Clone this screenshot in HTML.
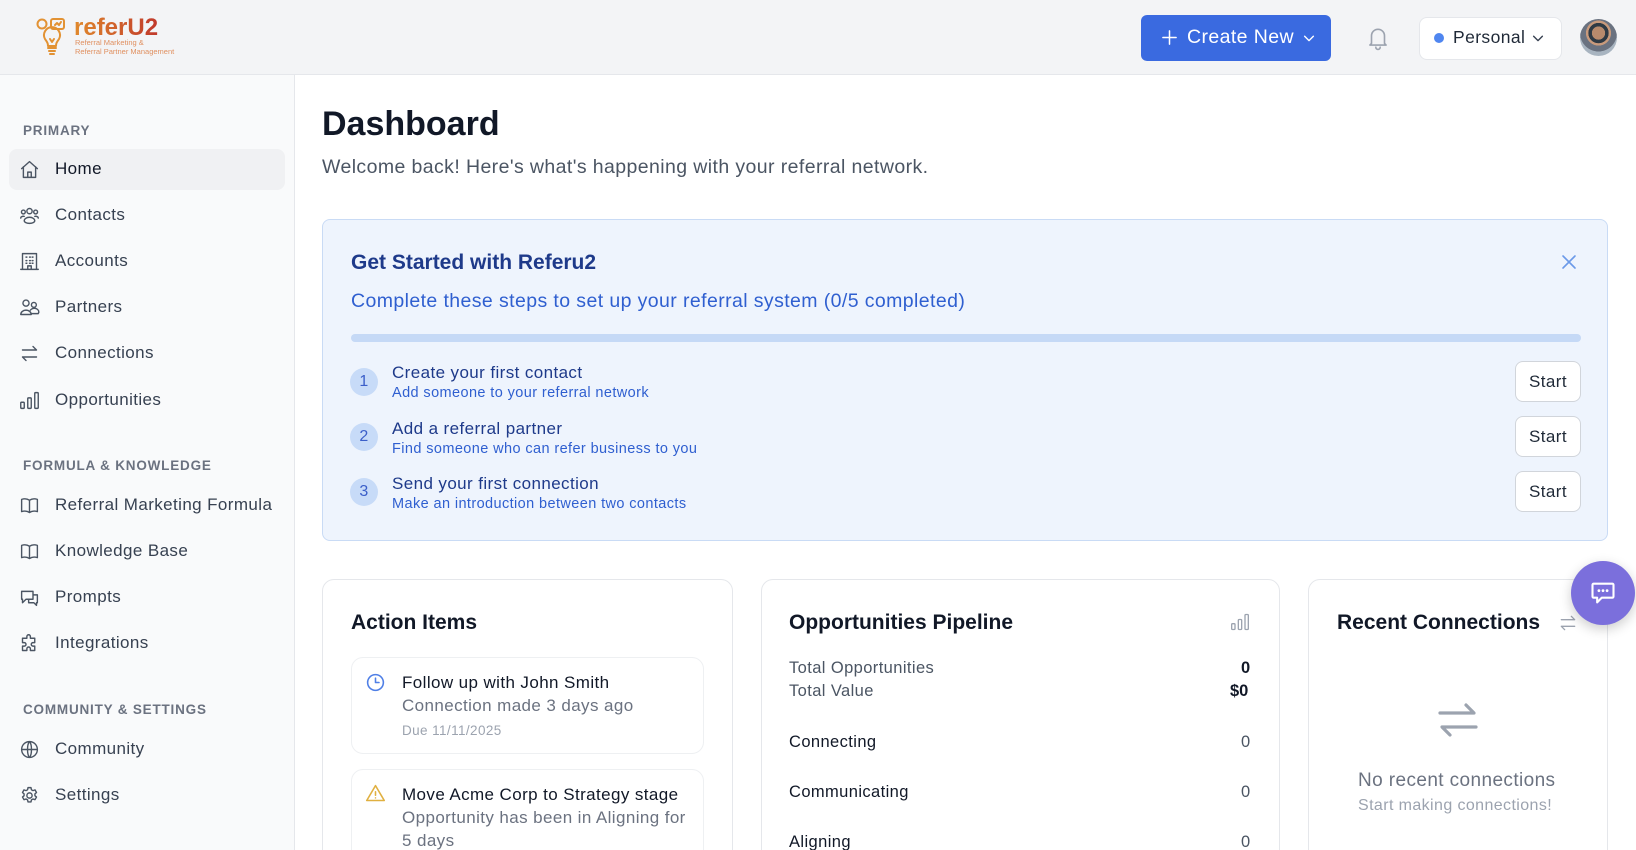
<!DOCTYPE html>
<html><head><meta charset="utf-8"><style>
*{margin:0;padding:0;box-sizing:border-box}
html{width:1636px;height:850px;overflow:hidden}
body{width:1636px;height:850px;overflow:hidden;background:#fff;font-family:"Liberation Sans",Arial,sans-serif;position:relative;color:#111827;letter-spacing:.025em}
.a{position:absolute}
.t{position:absolute;white-space:nowrap;line-height:1}
.b{letter-spacing:0}
svg{position:absolute;fill:none;stroke-linecap:round;stroke-linejoin:round}
.nav{font-size:17px;color:#374151}
.sec{font-size:13.5px;font-weight:bold;color:#6b7280;letter-spacing:.8px}
.ni{stroke:#4b5563;stroke-width:1.6}
.card{position:absolute;background:#fff;border:1px solid #e5e7eb;border-radius:12px}
.start{position:absolute;left:1515px;width:66px;height:41px;background:#fff;border:1px solid #d1d5db;border-radius:8px;font-size:17px;color:#1f2937;text-align:center;line-height:39px}
.num{position:absolute;left:350px;width:28px;height:28px;border-radius:50%;background:#c7dbf8;color:#3b5fc9;font-size:16px;text-align:center;line-height:28px}
</style></head><body>
<!-- header -->
<div class="a" style="left:0;top:0;width:1636px;height:75px;background:#f3f4f6;border-bottom:1px solid #e5e7eb"></div>
<svg style="left:36px;top:17px" width="34" height="40" viewBox="0 0 34 40" stroke="#e29234" stroke-width="2">
<circle cx="6" cy="7" r="4.5"/><rect x="15" y="2" width="13" height="10" rx="2"/><path d="M19 8l2-2 2 2 2-3"/>
<path d="M9 22a8 8 0 1 1 14 0c-2 3-3 4-3 7h-8c0-3-1-4-3-7z"/><path d="M12 31h8M13 34h6M14 37h4M14 22l2 3 2-3"/></svg>
<div class="t b" style="left:74px;top:16px;font-size:24px;font-weight:bold;background:linear-gradient(90deg,#e0892c,#c0392b);-webkit-background-clip:text;color:transparent">referU2</div>
<div class="t b" style="left:75px;top:39px;font-size:7.5px;color:#e09060">Referral Marketing &amp;</div>
<div class="t b" style="left:75px;top:48px;font-size:7.5px;color:#e09060">Referral Partner Management</div>

<div class="a" style="left:1141px;top:15px;width:190px;height:46px;background:#3a6ae0;border-radius:6px"></div>
<svg style="left:1161px;top:29px" width="17" height="17" viewBox="0 0 18 18" stroke="#fff" stroke-width="1.6"><path d="M9 2v14M2 9h14"/></svg>
<div class="t" style="left:1187px;top:28px;font-size:19.5px;color:#fff">Create New</div>
<svg style="left:1302px;top:31px" width="14" height="14" viewBox="0 0 16 16" stroke="#fff" stroke-width="1.6"><path d="M3 6l5 5 5-5"/></svg>
<svg style="left:1365px;top:25px" width="26" height="26" viewBox="0 0 24 24" stroke="#9ca3af" stroke-width="1.5"><path d="M6 17V10a6 6 0 0 1 12 0v7l1.5 1.5h-15zM10 20.5a2 2 0 0 0 4 0"/></svg>
<div class="a" style="left:1419px;top:17px;width:143px;height:43px;background:#fff;border:1px solid #e5e7eb;border-radius:8px"></div>
<div class="a" style="left:1434px;top:33px;width:10px;height:10px;border-radius:50%;background:#4f86f0"></div>
<div class="t" style="left:1453px;top:29px;font-size:17.5px;color:#1f2937">Personal</div>
<svg style="left:1531px;top:31px" width="14" height="14" viewBox="0 0 16 16" stroke="#374151" stroke-width="1.6"><path d="M3 6l5 5 5-5"/></svg>
<div class="a" style="left:1580px;top:19px;width:37px;height:37px;border-radius:50%;background:radial-gradient(circle at 50% 38%,#b88a6c 0 22%,#2f3a44 23% 34%,#c89a7c 35% 42%,#6a7280 43% 62%,#a8b4c0 63%)"></div>

<!-- sidebar -->
<div class="a" style="left:0;top:75px;width:295px;height:775px;background:#f9fafb;border-right:1px solid #e5e7eb"></div>
<div class="t sec" style="left:23px;top:124px">PRIMARY</div>
<div class="a" style="left:9px;top:149px;width:276px;height:41px;background:#f0f1f3;border-radius:8px"></div>
<svg class="ni" style="left:19px;top:159px" width="21" height="21" viewBox="0 0 24 24" stroke="#111827" stroke-width="1.7"><path d="M3 11l9-8 9 8M5 9v12h14V9M10 21v-6h4v6"/></svg>
<div class="t nav" style="left:55px;top:160px;color:#111827">Home</div>
<svg class="ni" style="left:19px;top:205px" width="21" height="21" viewBox="0 0 24 24"><circle cx="12" cy="7" r="3"/><circle cx="5" cy="8" r="2.2"/><circle cx="19" cy="8" r="2.2"/><path d="M6 18a6 4 0 0 1 12 0 6 3 0 0 1-12 0zM2 15a3 2 0 0 1 4-2M22 15a3 2 0 0 0-4-2"/></svg>
<div class="t nav" style="left:55px;top:206px">Contacts</div>
<svg class="ni" style="left:19px;top:251px" width="21" height="21" viewBox="0 0 24 24"><path d="M4 21V3h16v18M2 21h20M10 21v-4h4v4M8 7h1M12 7h1M15 7h1M8 11h1M12 11h1M15 11h1M8 14h1M12 14h1M15 14h1"/></svg>
<div class="t nav" style="left:55px;top:252px">Accounts</div>
<svg class="ni" style="left:19px;top:297px" width="21" height="21" viewBox="0 0 24 24"><circle cx="8" cy="7" r="3.5"/><circle cx="17" cy="9" r="2.8"/><path d="M2 20a6 5 0 0 1 12 0zM13 15a5 4 0 0 1 9 4h-7"/></svg>
<div class="t nav" style="left:55px;top:298px">Partners</div>
<svg class="ni" style="left:19px;top:343px" width="21" height="21" viewBox="0 0 24 24"><path d="M4 8h16l-4-4M20 16H4l4 4"/></svg>
<div class="t nav" style="left:55px;top:344px">Connections</div>
<svg class="ni" style="left:19px;top:390px" width="21" height="21" viewBox="0 0 24 24"><rect x="2" y="14" width="4" height="7" rx="1"/><rect x="10" y="9" width="4" height="12" rx="1"/><rect x="18" y="3" width="4" height="18" rx="1"/></svg>
<div class="t nav" style="left:55px;top:391px">Opportunities</div>

<div class="t sec" style="left:23px;top:459px">FORMULA &amp; KNOWLEDGE</div>
<svg class="ni" style="left:19px;top:495px" width="21" height="21" viewBox="0 0 24 24"><path d="M12 6c-3-2-6-2-9-1v14c3-1 6-1 9 1 3-2 6-2 9-1V5c-3-1-6-1-9 1zM12 6v14"/></svg>
<div class="t nav" style="left:55px;top:496px">Referral Marketing Formula</div>
<svg class="ni" style="left:19px;top:541px" width="21" height="21" viewBox="0 0 24 24"><path d="M12 6c-3-2-6-2-9-1v14c3-1 6-1 9 1 3-2 6-2 9-1V5c-3-1-6-1-9 1zM12 6v14"/></svg>
<div class="t nav" style="left:55px;top:542px">Knowledge Base</div>
<svg class="ni" style="left:19px;top:587px" width="21" height="21" viewBox="0 0 24 24"><path d="M3 5h13v9H8l-4 4v-4H3zM16 9h5v9h-1v3l-3-3h-6v-4"/></svg>
<div class="t nav" style="left:55px;top:588px">Prompts</div>
<svg class="ni" style="left:19px;top:633px" width="21" height="21" viewBox="0 0 24 24"><path d="M9 4a2 2 0 0 1 4 0v2h5v5h-2a2 2 0 0 0 0 4h2v5h-5v-2a2 2 0 0 0-4 0v2H4v-5h2a2 2 0 0 0 0-4H4V6h5z"/></svg>
<div class="t nav" style="left:55px;top:634px">Integrations</div>

<div class="t sec" style="left:23px;top:703px">COMMUNITY &amp; SETTINGS</div>
<svg class="ni" style="left:19px;top:739px" width="21" height="21" viewBox="0 0 24 24"><circle cx="12" cy="12" r="9"/><path d="M3 12h18M12 3c3 3 3 15 0 18M12 3c-3 3-3 15 0 18"/></svg>
<div class="t nav" style="left:55px;top:740px">Community</div>
<svg class="ni" style="left:19px;top:785px" width="21" height="21" viewBox="0 0 24 24"><circle cx="12" cy="12" r="3"/><path d="M10.3 3h3.4l.5 2.4 1.8 1 2.3-.8 1.7 3-1.8 1.6v2l1.8 1.6-1.7 3-2.3-.8-1.8 1-.5 2.4h-3.4l-.5-2.4-1.8-1-2.3.8-1.7-3 1.8-1.6v-2L4 8.6l1.7-3 2.3.8 1.8-1z"/></svg>
<div class="t nav" style="left:55px;top:786px">Settings</div>

<!-- main -->
<div class="t b" style="left:322px;top:107px;font-size:34px;font-weight:bold;color:#111827">Dashboard</div>
<div class="t" style="left:322px;top:158px;font-size:19.5px;color:#4b5563">Welcome back! Here's what's happening with your referral network.</div>

<div class="a" style="left:322px;top:219px;width:1286px;height:322px;background:#eef4fd;border:1px solid #c9dbf5;border-radius:8px"></div>
<div class="t b" style="left:351px;top:252px;font-size:21px;font-weight:bold;color:#1e3a8a">Get Started with Referu2</div>
<div class="t" style="left:351px;top:292px;font-size:19.5px;color:#2f5fd0">Complete these steps to set up your referral system (0/5 completed)</div>
<svg style="left:1561px;top:254px" width="16" height="16" viewBox="0 0 16 16" stroke="#6b9ae8" stroke-width="1.6"><path d="M2 2l12 12M14 2L2 14"/></svg>
<div class="a" style="left:351px;top:334px;width:1230px;height:8px;border-radius:4px;background:#c5d9f6"></div>

<div class="num" style="top:368px">1</div>
<div class="t" style="left:392px;top:364px;font-size:17px;color:#1e3a8a">Create your first contact</div>
<div class="t" style="left:392px;top:386px;font-size:14.5px;color:#2f5fd0">Add someone to your referral network</div>
<div class="start" style="top:361px">Start</div>
<div class="num" style="top:423px">2</div>
<div class="t" style="left:392px;top:420px;font-size:17px;color:#1e3a8a">Add a referral partner</div>
<div class="t" style="left:392px;top:442px;font-size:14.5px;color:#2f5fd0">Find someone who can refer business to you</div>
<div class="start" style="top:416px">Start</div>
<div class="num" style="top:478px">3</div>
<div class="t" style="left:392px;top:475px;font-size:17px;color:#1e3a8a">Send your first connection</div>
<div class="t" style="left:392px;top:497px;font-size:14.5px;color:#2f5fd0">Make an introduction between two contacts</div>
<div class="start" style="top:471px">Start</div>

<!-- action items -->
<div class="card" style="left:322px;top:579px;width:411px;height:300px"></div>
<div class="t b" style="left:351px;top:612px;font-size:21px;font-weight:bold;color:#111827">Action Items</div>
<div class="card" style="left:351px;top:657px;width:353px;height:97px;border-color:#eef0f2"></div>
<svg style="left:365px;top:672px" width="21" height="21" viewBox="0 0 24 24" stroke="#4f7fe6" stroke-width="1.8"><circle cx="12" cy="12" r="9"/><path d="M12 7v5h4"/></svg>
<div class="t" style="left:402px;top:674px;font-size:17px;color:#111827">Follow up with John Smith</div>
<div class="t" style="left:402px;top:697px;font-size:17px;color:#6b7280">Connection made 3 days ago</div>
<div class="t" style="left:402px;top:724px;font-size:13.5px;color:#9ca3af">Due 11/11/2025</div>
<div class="card" style="left:351px;top:769px;width:353px;height:120px;border-color:#eef0f2"></div>
<svg style="left:365px;top:783px" width="21" height="21" viewBox="0 0 24 24" stroke="#e0b040" stroke-width="1.8"><path d="M12 3L2 20h20zM12 10v4M12 17h.01"/></svg>
<div class="t" style="left:402px;top:786px;font-size:17px;color:#111827">Move Acme Corp to Strategy stage</div>
<div class="t" style="left:402px;top:809px;font-size:17px;color:#6b7280">Opportunity has been in Aligning for</div>
<div class="t" style="left:402px;top:832px;font-size:17px;color:#6b7280">5 days</div>

<!-- pipeline -->
<div class="card" style="left:761px;top:579px;width:519px;height:300px"></div>
<div class="t b" style="left:789px;top:612px;font-size:21px;font-weight:bold;color:#111827">Opportunities Pipeline</div>
<svg style="left:1230px;top:612px" width="20" height="20" viewBox="0 0 24 24" stroke="#9ca3af" stroke-width="1.6"><rect x="2" y="14" width="4" height="7" rx="1"/><rect x="10" y="9" width="4" height="12" rx="1"/><rect x="18" y="3" width="4" height="18" rx="1"/></svg>
<div class="t" style="left:789px;top:660px;font-size:16.5px;color:#4b5563">Total Opportunities</div>
<div class="t" style="left:789px;top:683px;font-size:16.5px;color:#4b5563">Total Value</div>
<div class="t b" style="left:1241px;top:660px;font-size:16.5px;font-weight:bold;color:#111827">0</div>
<div class="t b" style="left:1230px;top:683px;font-size:16.5px;font-weight:bold;color:#111827">$0</div>
<div class="t" style="left:789px;top:734px;font-size:16.5px;color:#111827">Connecting</div>
<div class="t" style="left:1241px;top:734px;font-size:16.5px;color:#4b5563">0</div>
<div class="t" style="left:789px;top:784px;font-size:16.5px;color:#111827">Communicating</div>
<div class="t" style="left:1241px;top:784px;font-size:16.5px;color:#4b5563">0</div>
<div class="t" style="left:789px;top:834px;font-size:16.5px;color:#111827">Aligning</div>
<div class="t" style="left:1241px;top:834px;font-size:16.5px;color:#4b5563">0</div>

<!-- recent -->
<div class="card" style="left:1308px;top:579px;width:300px;height:300px"></div>
<div class="t b" style="left:1337px;top:612px;font-size:21px;font-weight:bold;color:#111827">Recent Connections</div>
<svg style="left:1558px;top:613px" width="20" height="20" viewBox="0 0 24 24" stroke="#9ca3af" stroke-width="1.6"><path d="M4 8h16l-4-4M20 16H4l4 4"/></svg>
<svg style="left:1434px;top:696px" width="48" height="48" viewBox="0 0 24 24" stroke="#9ca3af" stroke-width="1.6"><path d="M3 8.5h17l-4-4M21 15.5H4l4 4"/></svg>
<div class="t" style="left:1358px;top:771px;font-size:19px;color:#6b7280">No recent connections</div>
<div class="t" style="left:1358px;top:798px;font-size:16px;color:#9ca3af">Start making connections!</div>

<!-- chat -->
<div class="a" style="left:1571px;top:561px;width:64px;height:64px;border-radius:50%;background:#7b6fdc;box-shadow:0 4px 12px rgba(0,0,0,.2)"></div>
<svg style="left:1589px;top:579px" width="28" height="28" viewBox="0 0 24 24" stroke="#fff" stroke-width="1.8"><path d="M4 4h16a1 1 0 0 1 1 1v10a1 1 0 0 1-1 1h-9l-4 4v-4H4a1 1 0 0 1-1-1V5a1 1 0 0 1 1-1z"/><path d="M8.5 10h.01M12 10h.01M15.5 10h.01" stroke-width="2.4"/></svg>
</body></html>
